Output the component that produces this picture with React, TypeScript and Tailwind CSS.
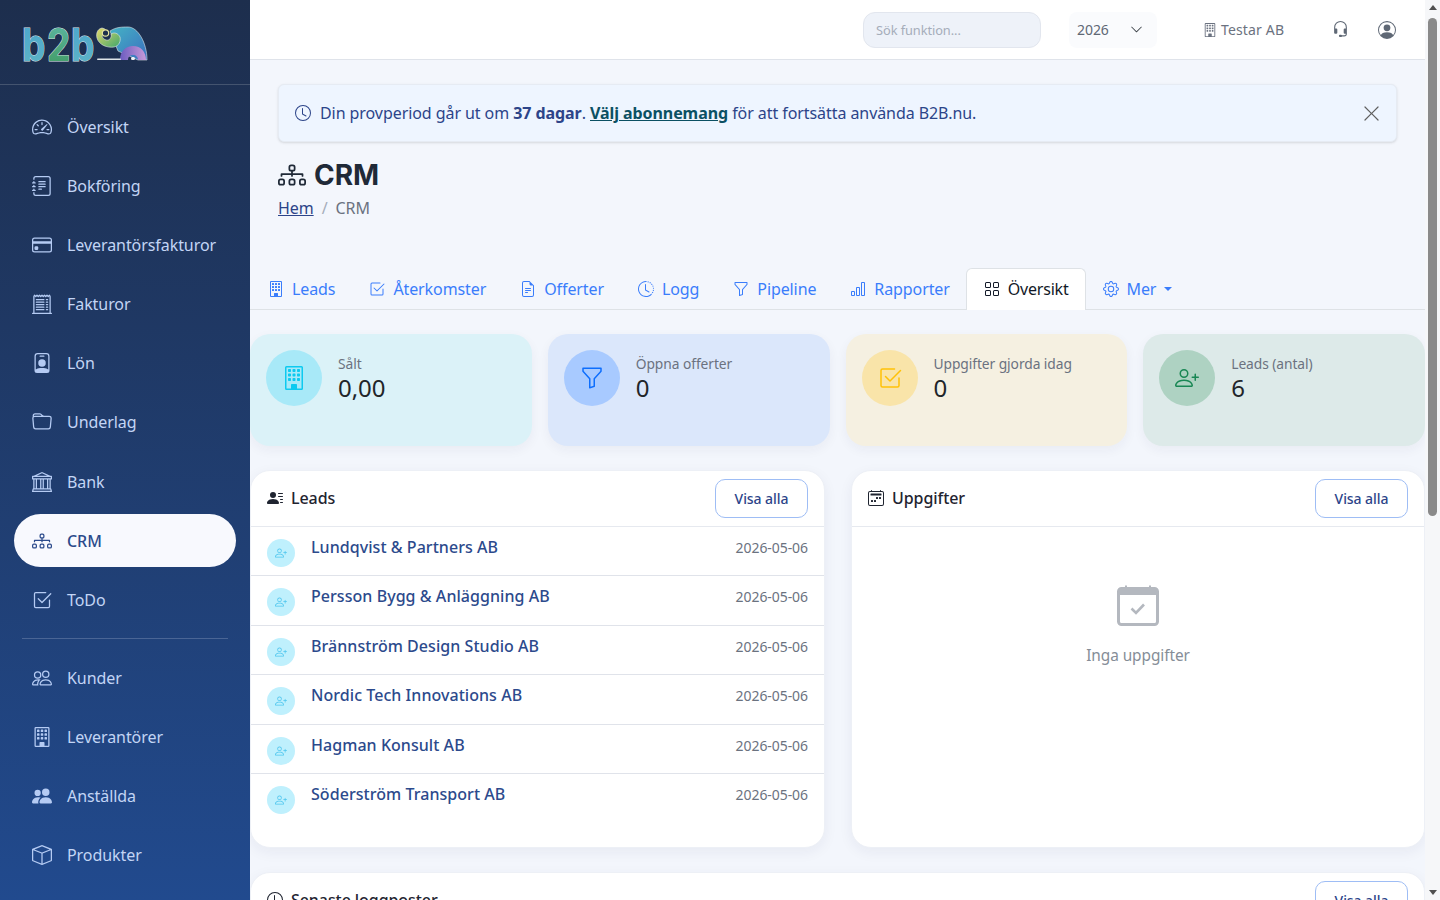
import type { ReactNode } from "react";
import {
  BsBank, BsBarChart, BsBox, BsBuilding, BsCalendar2Week, BsCheck2Square, BsChevronDown,
  BsClock, BsClockHistory, BsCreditCard, BsDiagram3, BsFileEarmarkText, BsFolder, BsFunnel, BsGear,
  BsGrid, BsHeadset, BsJournalText, BsPeople, BsPeopleFill, BsPersonBadge, BsPersonCircle, BsPersonLinesFill,
  BsPersonPlus, BsReceiptCutoff, BsSpeedometer2, BsXLg,
} from "react-icons/bs";

const mainNav = [
  { label: "Översikt", icon: <BsSpeedometer2 /> },
  { label: "Bokföring", icon: <BsJournalText /> },
  { label: "Leverantörsfakturor", icon: <BsCreditCard /> },
  { label: "Fakturor", icon: <BsReceiptCutoff /> },
  { label: "Lön", icon: <BsPersonBadge /> },
  { label: "Underlag", icon: <BsFolder /> },
  { label: "Bank", icon: <BsBank /> },
  { label: "CRM", icon: <BsDiagram3 />, active: true },
  { label: "ToDo", icon: <BsCheck2Square /> },
];

const registerNav = [
  { label: "Kunder", icon: <BsPeople /> },
  { label: "Leverantörer", icon: <BsBuilding /> },
  { label: "Anställda", icon: <BsPeopleFill /> },
  { label: "Produkter", icon: <BsBox /> },
];

const tabs = [
  { label: "Leads", icon: <BsBuilding /> },
  { label: "Återkomster", icon: <BsCheck2Square /> },
  { label: "Offerter", icon: <BsFileEarmarkText /> },
  { label: "Logg", icon: <BsClockHistory /> },
  { label: "Pipeline", icon: <BsFunnel /> },
  { label: "Rapporter", icon: <BsBarChart /> },
];

const stats = [
  { label: "Sålt", value: "0,00", icon: <BsBuilding />, card: "bg-[#dbf2f8]", circle: "bg-[#a8e9f8] text-[#0dcaf0]" },
  { label: "Öppna offerter", value: "0", icon: <BsFunnel />, card: "bg-[#dbe7fb]", circle: "bg-[#a8caff] text-[#0d6efd]" },
  { label: "Uppgifter gjorda idag", value: "0", icon: <BsCheck2Square />, card: "bg-[#f5f0e1]", circle: "bg-[#f9e4a9] text-[#ffc107]" },
  { label: "Leads (antal)", value: "6", icon: <BsPersonPlus />, card: "bg-[#ddeae9]", circle: "bg-[#aed2c2] text-[#198754]" },
];

const leads = [
  "Lundqvist & Partners AB",
  "Persson Bygg & Anläggning AB",
  "Brännström Design Studio AB",
  "Nordic Tech Innovations AB",
  "Hagman Konsult AB",
  "Söderström Transport AB",
];

function Logo() {
  const letter = { y: 27.9, fontFamily: "Inter, sans-serif", fontWeight: 700, fontSize: 37, stroke: "#dfe6ea", strokeWidth: 0.9, paintOrder: "stroke" };
  return (
    <svg width="126" height="36" viewBox="0 0 126 36" className="overflow-visible">
      <defs>
        <linearGradient id="letters" x1="0" y1="0" x2="0" y2="1">
          <stop offset="0" stopColor="#4aa6cf" />
          <stop offset="1" stopColor="#5fb4c4" />
        </linearGradient>
        <linearGradient id="two" x1="0" y1="0" x2="0" y2="1">
          <stop offset="0" stopColor="#5fb8a8" />
          <stop offset="1" stopColor="#3f9a5f" />
        </linearGradient>
        <linearGradient id="trunk" x1="0" y1="0" x2="1" y2="1">
          <stop offset="0" stopColor="#e5d96a" />
          <stop offset="1" stopColor="#3fa66b" />
        </linearGradient>
        <linearGradient id="body" x1="0" y1="0" x2="1" y2="1">
          <stop offset="0" stopColor="#45b3c4" />
          <stop offset="1" stopColor="#3a6fc0" />
        </linearGradient>
        <linearGradient id="legs" x1="0" y1="0" x2="1" y2="0">
          <stop offset="0" stopColor="#6c5cc0" />
          <stop offset="1" stopColor="#c79ad8" />
        </linearGradient>
      </defs>
      <g transform="scale(1 1.22)">
        <text x="0" fill="url(#letters)" {...letter}>b</text>
        <text x="25" fill="url(#two)" {...letter}>2</text>
        <text x="49" fill="url(#letters)" {...letter}>b</text>
      </g>
      <path d="M88 4 C94 0 100 0 106 0 C116 0 125 16 125 33 L116 33 L96 24 Z" fill="url(#body)" stroke="#dfe6ea" strokeWidth="0.6" />
      <path d="M98 33 C98 24 104 19 111 19 C119 19 124 25 124 33 L116 33 C116 30 114 28 111 28 C108 28 106 30 106 33 Z" fill="url(#legs)" />
      <path d="M80 1 C75 2 74 7 75 11 C77 18 85 21 92 20 C97 19 99 14 98 10 C96 6 92 5 89 7 C90 11 87 14 84 13 C81 12 79 9 81 7 C85 7 86 2 80 1 Z" fill="url(#trunk)" stroke="#dfe6ea" strokeWidth="0.6" />
      <circle cx="83.5" cy="6" r="3.2" fill="#1e2f4d" stroke="#e8e4a0" strokeWidth="1.2" />
      <rect x="75" y="31.5" width="24" height="1.6" rx="0.8" fill="#dfe6ea" />
      <rect x="109" y="30" width="4" height="3" rx="1.5" fill="#f1f4f8" />
    </svg>
  );
}

function EmptyCalendar() {
  return (
    <svg width="42" height="41" viewBox="0 0 42 41" fill="none" className="text-[#b4b8bf]">
      <path d="M9 0.5 V5 M33 0.5 V5" stroke="currentColor" strokeWidth="2" />
      <rect x="1.5" y="3.5" width="39" height="36" rx="3" stroke="currentColor" strokeWidth="3" />
      <path d="M2 5 H40 V10 H2 Z" fill="currentColor" />
      <path d="M14.5 23.5 L19 28 L27 19.5" stroke="currentColor" strokeWidth="2.6" />
    </svg>
  );
}

function NavItem({ label, icon, active }: { label: string; icon: ReactNode; active?: boolean }) {
  return (
    <a
      className={
        active
          ? "flex h-[53.125px] items-center gap-[15px] rounded-[27px] bg-[#f8f9fe] px-[18px] text-[#2b4a8b] font-medium"
          : "flex h-[53.125px] items-center gap-[15px] rounded-[27px] px-[18px] text-[#c3d5f5]"
      }
    >
      <span className={active ? "text-[20px]" : "text-[20px] text-[#b5cbf3]"}>{icon}</span>
      {label}
    </a>
  );
}

function Sidebar() {
  return (
    <aside className="h-screen w-[250px] shrink-0 overflow-hidden bg-gradient-to-b from-[#1d2e4d] to-[#214a8e]">
      <div className="flex h-[85px] items-start border-b border-[#44546f] pl-[22px] pt-[27px]">
        <Logo />
      </div>
      <nav className="px-[14px] pt-[15.25px]">
        <div className="flex flex-col gap-[6px]">
          {mainNav.map((item) => (
            <NavItem key={item.label} {...item} />
          ))}
        </div>
        <hr className="mx-2 mb-[12.5px] mt-[11.75px] border-[#4a6595]" />
        <div className="flex flex-col gap-[5.9px]">
          {registerNav.map((item) => (
            <NavItem key={item.label} {...item} />
          ))}
        </div>
      </nav>
    </aside>
  );
}

function Topbar() {
  return (
    <header className="flex h-[60px] items-center border-b border-[#dfe3ea] bg-white pl-[613px]">
      <input
        placeholder="Sök funktion..."
        className="h-9 w-[178px] rounded-xl border border-[#e2e6ee] bg-[#eef2f9] px-3 text-[12.8px] outline-none placeholder:text-[#a5adba]"
      />
      <div className="ml-7 flex h-9 w-[88px] items-center justify-between rounded-lg bg-[#fafbfd] pl-2 pr-[14px] text-sm text-[#5f6875]">
        2026
        <BsChevronDown className="text-[13px] text-[#343a40]" />
      </div>
      <div className="ml-[46px] flex items-center gap-[4px] text-sm tracking-[0.15px] text-[#6b7280]">
        <BsBuilding className="text-[14px]" />
        Testar AB
      </div>
      <BsHeadset className="ml-[48px] text-[17px] text-[#5f6875]" />
      <BsPersonCircle className="ml-[29px] text-[18px] text-[#5f6875]" />
    </header>
  );
}

function TrialAlert() {
  return (
    <div className="ml-7 mr-7 mt-6 flex h-[58px] items-center rounded-md border border-[#e6ebf3] bg-[#eef5ff] pl-4 pr-[15px] text-[#2c4489] shadow-sm">
      <BsClock className="text-[16px]" />
      <p className="ml-[9px] flex-1">
        Din provperiod går ut om <b className="font-bold">37 dagar</b>.{" "}
        <a className="font-bold text-[#0b5063] underline">Välj abonnemang</a> för att fortsätta använda B2B.nu.
      </p>
      <BsXLg className="text-[19px] text-[#5f5f5f]" />
    </div>
  );
}

function PageTitle() {
  return (
    <div className="ml-7 mt-[13px]">
      <h1 className="flex h-10 items-center gap-2 font-['Inter',sans-serif] text-[28px] font-bold text-[#1f2937]">
        <BsDiagram3 />
        CRM
      </h1>
      <div className="mt-[1px] flex gap-2 leading-6 text-[#6b7280]">
        <a className="text-[#2c4489] underline">Hem</a>
        <span className="text-[#a5adba]">/</span>
        <span>CRM</span>
      </div>
    </div>
  );
}

function Tabs() {
  return (
    <div className="mt-[48px] flex h-[42px] border-b border-[#dee2e6] pl-[1px] tracking-[-0.1px]">
      {tabs.map((tab) => (
        <a key={tab.label} className="flex items-center gap-2 px-[17px] text-[#3a7dfb]">
          {tab.icon}
          {tab.label}
        </a>
      ))}
      <a className="-ml-[1px] flex h-[42px] items-center gap-2 rounded-t-md border border-b-0 border-[#dee2e6] bg-white pb-[1px] pl-[17px] pr-[16px] tracking-[-0.2px] text-[#111827]">
        <BsGrid />
        Översikt
      </a>
      <a className="flex items-center gap-2 px-[17px] text-[#3a7dfb]">
        <BsGear />
        Mer
        <span className="h-0 w-0 border-x-[4px] border-t-[4px] border-x-transparent border-t-[#3a7dfb]" />
      </a>
    </div>
  );
}

function StatCards() {
  return (
    <div className="mt-6 grid grid-cols-4 gap-4">
      {stats.map((stat) => (
        <div key={stat.label} className={`flex h-[112px] gap-4 rounded-[20px] p-4 shadow-[0_4px_12px_rgba(31,41,80,0.05)] ${stat.card}`}>
          <div className={`flex h-14 w-14 shrink-0 items-center justify-center rounded-full text-[24px] ${stat.circle}`}>
            {stat.icon}
          </div>
          <div>
            <div className="text-[13.8px] leading-[28px] text-[#6b7280]">{stat.label}</div>
            <div className="text-[24px] leading-[20px] text-[#212529]">{stat.value}</div>
          </div>
        </div>
      ))}
    </div>
  );
}

function Panel({ title, icon, className, children }: { title: string; icon: ReactNode; className: string; children: ReactNode }) {
  return (
    <section className={`rounded-[20px] border border-[#edf0f6] bg-white shadow-[0_4px_14px_rgba(31,41,80,0.06)] ${className}`}>
      <div className="flex h-[56px] items-center justify-between border-b border-[#e6e9ef] pl-4 pr-4">
        <h2 className="flex items-center gap-2 pb-[2px] font-medium text-[#1f2430]">
          {icon}
          {title}
        </h2>
        <button className="h-[39px] w-[93px] rounded-[10px] border border-[#9ebdf5] text-sm font-medium text-[#2c4489]">
          Visa alla
        </button>
      </div>
      {children}
    </section>
  );
}

// the browser that takes the picture hides real scrollbars, so this one is drawn
function Scrollbar() {
  return (
    <div className="flex h-screen w-[15px] shrink-0 flex-col items-center bg-[#f6f7f9]">
      <div className="mt-[5px] h-0 w-0 border-x-[4.5px] border-b-[5px] border-x-transparent border-b-[#505050]" />
      <div className="mt-[8px] h-[498px] w-[9px] rounded-[5px] bg-[#8a8a8a]" />
      <div className="mb-[5px] mt-auto h-0 w-0 border-x-[4.5px] border-t-[5px] border-x-transparent border-t-[#505050]" />
    </div>
  );
}

export default function App() {
  return (
    <div className="flex h-screen overflow-hidden bg-[#f3f6fc] font-['Noto_Sans',sans-serif] tracking-[-0.07px]">
      <Sidebar />
      <main className="min-w-0 flex-1 overflow-y-auto [scrollbar-width:none]">
        <Topbar />
        <TrialAlert />
        <PageTitle />
        <Tabs />
        <StatCards />
        <div className="mt-6 grid grid-cols-[575px_1fr] gap-[26px]">
          <Panel title="Leads" icon={<BsPersonLinesFill />} className="h-[378px]">
            {leads.map((name, i) => (
              <div
                key={name}
                className={
                  i < leads.length - 1
                    ? "flex h-[49.4px] border-b border-[#e0e3ea] pl-4 pr-4 pt-3"
                    : "flex h-[49.4px] pl-4 pr-4 pt-3"
                }
              >
                <div className="flex h-7 w-7 shrink-0 items-center justify-center rounded-full bg-[#bff0fd] text-[12px] text-[#4cc5ee]">
                  <BsPersonPlus />
                </div>
                <div className="ml-4 flex-1 -translate-y-[4px] font-medium leading-6 tracking-[0.05px] text-[#2c4a8c]">{name}</div>
                <div className="-translate-y-[3px] text-sm leading-6 text-[#6b7280]">2026-05-06</div>
              </div>
            ))}
          </Panel>
          <Panel title="Uppgifter" icon={<BsCalendar2Week />} className="h-[378px]">
            <div className="flex flex-col items-center pt-[58px]">
              <EmptyCalendar />
              <div className="mt-[18px] text-[15.4px] text-[#858d97]">Inga uppgifter</div>
            </div>
          </Panel>
        </div>
        <Panel title="Senaste loggposter" icon={<BsClock />} className="mt-[24px] h-[400px]">
          <div />
        </Panel>
      </main>
      <Scrollbar />
    </div>
  );
}
